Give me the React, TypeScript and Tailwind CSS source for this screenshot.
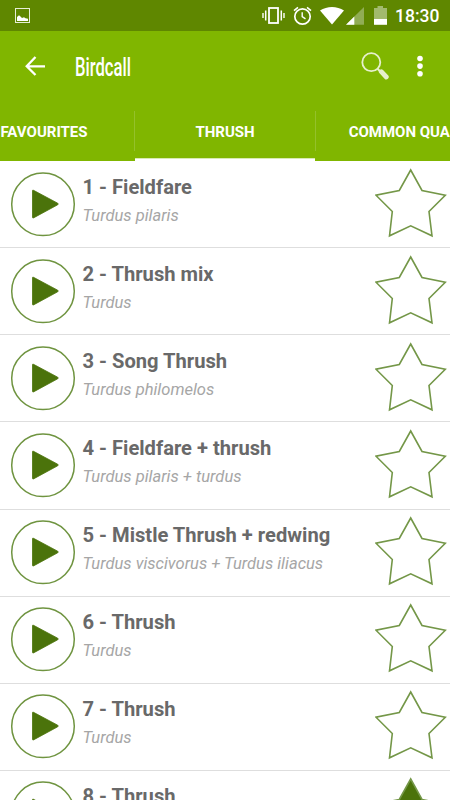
import { useState } from "react";

type Call = { name: string; latin: string; starred?: boolean };

const CALLS: Call[] = [
  { name: "Fieldfare", latin: "Turdus pilaris" },
  { name: "Thrush mix", latin: "Turdus" },
  { name: "Song Thrush", latin: "Turdus philomelos" },
  { name: "Fieldfare + thrush", latin: "Turdus pilaris + turdus" },
  { name: "Mistle Thrush + redwing", latin: "Turdus viscivorus + Turdus iliacus" },
  { name: "Thrush", latin: "Turdus" },
  { name: "Thrush", latin: "Turdus" },
  { name: "Thrush", latin: "Turdus", starred: true },
];

function StatusBar() {
  return (
    <div className="flex h-[31px] shrink-0 items-start bg-[#5f8700] text-white">
      <svg className="mt-2 ml-[15px] h-[15px] w-[15px]" viewBox="0 0 15 15" fill="none">
        <rect x="0.5" y="0.5" width="14" height="14" stroke="#e6eed6" />
        <path d="M2 13V9L4 7.3L5.5 8.5L7 10L9 9.3L10.5 10.3L13 10.7V13Z" fill="white" />
      </svg>
      <div className="ml-auto flex items-start">
        <svg className="mt-[6px] h-5 w-6" viewBox="0 0 24 20" fill="none" stroke="white">
          <rect x="7" y="2" width="9" height="15" strokeWidth="1.8" />
          <path d="M3.7 4.5V14.5M19.3 4.5V14.5" strokeWidth="1.5" />
          <path d="M1 7V12M22 7V12" strokeWidth="1.4" />
        </svg>
        <svg className="mt-[6px] ml-[7px] h-5 w-5" viewBox="0 0 20 20" fill="none" stroke="white">
          <circle cx="9.5" cy="10.5" r="7.7" strokeWidth="1.7" />
          <path d="M9.2 6.3V10.7L12.5 12.8" strokeWidth="1.4" />
          <path d="M1 4.6L5 1.3M14 1.3L18 4.6" strokeWidth="1.6" />
        </svg>
        <svg className="mt-[6px] ml-[7px] h-[19px] w-6" viewBox="0 0 24 19">
          <path d="M0 4.5C7 -.3 17 -.3 24 4.5L12 18.5Z" fill="white" />
        </svg>
        <svg className="mt-[6px] ml-[2px] h-[19px] w-[18px]" viewBox="0 0 18 19">
          <path d="M0 18.7L18 1V18.7Z" fill="#91ad55" />
          <path d="M0 18.7L8.3 10.5V18.7Z" fill="white" />
        </svg>
        <svg className="mt-[6px] ml-[10px] h-[19px] w-[13px]" viewBox="0 0 13 19">
          <path d="M0 2H3.5V0H9V2H13V18.7H0Z" fill="#a2ba6e" />
          <path d="M0 13H13V18.7H0Z" fill="white" />
        </svg>
        <span className="mt-[5px] mr-[10px] ml-[8px] w-[45px] text-[17.5px] leading-[23px] font-medium">18:30</span>
      </div>
    </div>
  );
}

function AppBar() {
  return (
    <div className="flex h-[70px] items-center pr-[26px] pl-[25px] text-white">
      <svg className="h-5 w-5" viewBox="0 0 20 20" fill="none" stroke="white" strokeWidth="2.3">
        <path d="M20 10.3H2M10.5 1L1.7 10.3L10.5 19" />
      </svg>
      <h1 className="mt-px ml-[30px] w-[57px] origin-left scale-x-[0.64] text-[26px] leading-[30px] font-medium whitespace-nowrap">
        Birdcall
      </h1>
      <svg className="ml-auto h-7 w-7" viewBox="0 0 28 28" fill="none" stroke="#e6f0cc">
        <circle cx="10.3" cy="10.2" r="9" strokeWidth="1.8" />
        <path d="M16.5 16.8L19.5 19.8" strokeWidth="2" />
        <path d="M20.3 19.7L25.3 25" strokeWidth="4.8" strokeLinecap="round" />
      </svg>
      <svg className="ml-[27px] h-[22px] w-2" viewBox="0 0 8 22" fill="white">
        <circle cx="4" cy="3.5" r="2.8" />
        <circle cx="4" cy="11.1" r="2.8" />
        <circle cx="4" cy="18.7" r="2.8" />
      </svg>
    </div>
  );
}

function Tabs() {
  const tab = "flex w-[180px] shrink-0 items-center justify-center pt-[3px] text-[15px] font-bold";
  return (
    <div className="flex h-[60px] justify-center overflow-hidden text-white">
      <div className={tab}>
        <span className="-ml-[2px]">FAVOURITES</span>
      </div>
      <div className={`${tab} relative`}>
        <span className="absolute top-[10px] -left-px h-10 w-px bg-[#94c12b]" />
        THRUSH
        <span className="absolute top-[10px] -right-px h-10 w-px bg-[#94c12b]" />
        <span className="absolute bottom-0 left-0 box-content h-[2px] w-full border-t border-[#d9eab3] bg-white" />
      </div>
      <div className={tab}>
        <span className="-mr-px whitespace-nowrap">COMMON QUAIL</span>
      </div>
    </div>
  );
}

function CallRow({ index, call, onStar }: { index: number; call: Call; onStar: () => void }) {
  return (
    <li className="flex h-[87.14px] shrink-0 items-start border-b border-[#dedede] pr-[3px] pl-[10px]">
      <button className="mt-[9.55px]">
        <svg className="h-[66px] w-[66px]" viewBox="0 0 66 66">
          <circle cx="33" cy="33.3" r="31.3" fill="none" stroke="#6f9440" strokeWidth="1.5" />
          <path
            d="M23.5 19.3L47.7 32.2Q49 33 47.7 33.8L23.5 46.9Q22.5 47.3 22.5 46V20Q22.5 18.7 23.5 19.3Z"
            fill="#4b730b"
            stroke="#4b730b"
            strokeWidth="0.8"
          />
        </svg>
      </button>
      <div className="ml-[6.5px] pt-[11.55px] whitespace-nowrap">
        <div className="text-[20.15px] leading-7 font-bold text-[#696969]">
          {index} - {call.name}
        </div>
        <div className="text-[16.55px] leading-[29px] font-normal text-[#a6a6a6] italic">{call.latin}</div>
      </div>
      <button className="mt-[6.55px] ml-auto" onClick={onStar}>
        <svg className="h-[70px] w-[72px]" viewBox="0 0 72 70">
          <path
            d="M35.7 2L47 22.5L70.3 27.2L54 43.5L57 67.8L35.7 57.8L14.5 67.8L17.3 43.5L1 27.2L24.3 22.5Z"
            fill={call.starred ? "#4b730b" : "none"}
            stroke="#749748"
            strokeWidth="1.6"
          />
        </svg>
      </button>
    </li>
  );
}

export default function App() {
  const [calls, setCalls] = useState(CALLS);

  const toggleStar = (i: number) => {
    setCalls(calls.map((c, n) => (n === i ? { ...c, starred: !c.starred } : c)));
  };

  return (
    <main className="flex h-[800px] w-[450px] flex-col overflow-hidden bg-white font-[Roboto,sans-serif]">
      <StatusBar />
      <header className="h-[130px] shrink-0 bg-[#80b600]">
        <AppBar />
        <Tabs />
      </header>
      <ul className="flex flex-col">
        {calls.map((call, i) => (
          <CallRow key={i} index={i + 1} call={call} onStar={() => toggleStar(i)} />
        ))}
      </ul>
    </main>
  );
}
